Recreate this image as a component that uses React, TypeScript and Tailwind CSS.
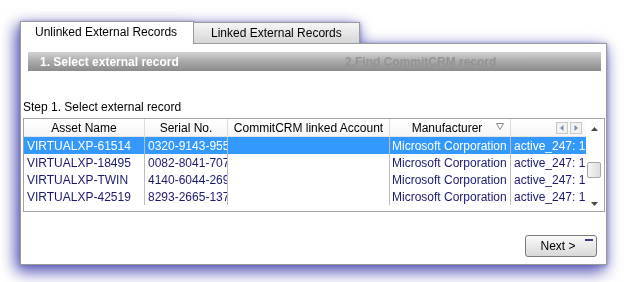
import React from "react";

const rows = [
  { name: "VIRTUALXP-61514", serial: "0320-9143-955", sel: true },
  { name: "VIRTUALXP-18495", serial: "0082-8041-707", sel: false },
  { name: "VIRTUALXP-TWIN", serial: "4140-6044-269", sel: false },
  { name: "VIRTUALXP-42519", serial: "8293-2665-137", sel: false },
];

export default function App() {
  return (
    <div
      className="w-[625px] h-[282px] bg-white overflow-hidden pl-[20px] pt-[20px]"
      style={{ fontFamily: '"Liberation Sans", Arial, sans-serif' }}
    >
      <div className="w-[587px] [filter:drop-shadow(-3px_5px_8px_rgba(70,70,175,0.8))_drop-shadow(0_1px_2px_rgba(70,70,175,0.6))]">
        {/* tabs */}
        <div className="flex items-end h-[23px]">
          <div className="w-[174px] h-[23px] bg-white border border-b-0 border-[#9a9a9a] text-[12px] text-black pl-[14px] pt-[3px] leading-[15px] relative z-10 -mb-px">
            Unlinked External Records
          </div>
          <div className="w-[166px] h-[21px] bg-gradient-to-b from-[#f6f6f6] to-[#d6d6d6] border border-l-0 border-b-0 border-[#9a9a9a] text-[12px] text-black pl-[17px] pt-[3px] leading-[15px]">
            Linked External Records
          </div>
        </div>
        {/* panel */}
        <div className="h-[222px] bg-white border border-[#9a9a9a] flex flex-col">
          <div className="mt-[8px] ml-[7px] mr-[5px] h-[19px] bg-gradient-to-b from-[#d4d4d4] via-[#a9a9a9] to-[#8c8c8c] flex items-center text-[12px] font-bold leading-[14px]">
            <span className="ml-[12px] text-white w-[305px]">1. Select external record</span>
            <span className="text-[#939393]">2.Find CommitCRM record</span>
          </div>
          <div className="mt-[29px] ml-[2px] text-[12px] leading-[14px] text-black">
            Step 1. Select external record
          </div>
          {/* table */}
          <div className="mt-[4px] ml-[2px] mr-[1px] h-[94px] border border-[#a5a5a5] flex text-[12px] leading-[14px]">
            <div className="w-[562px] flex flex-col">
              <div className="h-[18px] flex items-center border-b border-[#e4e4e4] bg-gradient-to-b from-white to-[#f6f6f6] text-black">
                <div className="w-[121px] h-full flex items-center justify-center border-r border-[#dcdcdc]">Asset Name</div>
                <div className="w-[83px] h-full flex items-center justify-center border-r border-[#dcdcdc]">Serial No.</div>
                <div className="w-[162px] h-full flex items-center justify-center border-r border-[#dcdcdc]">CommitCRM linked Account</div>
                <div className="w-[121px] h-full flex items-center justify-center border-r border-[#dcdcdc] relative">
                  <span className="ml-[-6px]">Manufacturer</span>
                  <svg className="absolute right-[6px] top-[4px]" width="8" height="7" viewBox="0 0 8 7">
                    <path d="M0.5 0.5 H7.5 L4 6.5 Z" fill="none" stroke="#8a8a8a" strokeWidth="1" />
                  </svg>
                </div>
                <div className="w-[75px] h-full flex items-center justify-end pr-[4px] gap-[2px]">
                  <div className="w-[12px] h-[12px] border border-[#c8c8c8] bg-[#f2f2f2] flex items-center justify-center">
                    <svg width="4" height="6" viewBox="0 0 4 6"><path d="M3.5 0 V6 L0 3 Z" fill="#7b8db8" /></svg>
                  </div>
                  <div className="w-[12px] h-[12px] border border-[#c8c8c8] bg-[#f2f2f2] flex items-center justify-center">
                    <svg width="4" height="6" viewBox="0 0 4 6"><path d="M0.5 0 V6 L4 3 Z" fill="#7b8db8" /></svg>
                  </div>
                </div>
              </div>
              {rows.map((r) => (
                <div
                  key={r.name}
                  className={
                    "h-[17px] flex " +
                    (r.sel ? "bg-[#3399ff] text-white" : "bg-white text-[#1a1a70]")
                  }
                >
                  <div className="w-[121px] pl-[3px] flex items-center border-r border-[#bdbdbd] overflow-hidden whitespace-nowrap">{r.name}</div>
                  <div className="w-[83px] pl-[3px] flex items-center border-r border-[#bdbdbd] overflow-hidden whitespace-nowrap">{r.serial}</div>
                  <div className="w-[162px] border-r border-[#bdbdbd]"></div>
                  <div className="w-[121px] pl-[2px] flex items-center border-r border-[#bdbdbd] overflow-hidden whitespace-nowrap">Microsoft Corporation</div>
                  <div className="w-[75px] pl-[3px] flex items-center overflow-hidden whitespace-nowrap">active_247: 1</div>
                </div>
              ))}
            </div>
            {/* vertical scrollbar */}
            <div className="w-[16px] h-full bg-white flex flex-col items-center">
              <div className="h-[18px] flex items-center justify-center mt-[1px]">
                <svg width="7" height="4" viewBox="0 0 7 4"><path d="M0 4 H7 L3.5 0 Z" fill="#4a4a4a" /></svg>
              </div>
              <div className="mt-[24px] w-[14px] h-[16px] rounded-[2px] border border-[#a8a8a8] bg-gradient-to-r from-[#f4f4f4] to-[#dedede]"></div>
              <div className="flex-1"></div>
              <div className="h-[14px] flex items-center justify-center">
                <svg width="7" height="4" viewBox="0 0 7 4"><path d="M0 0 H7 L3.5 4 Z" fill="#4a4a4a" /></svg>
              </div>
            </div>
          </div>
          {/* button */}
          <div className="flex justify-end mr-[9px] mt-[23px]">
            <div className="relative w-[72px] h-[22px] rounded-[3px] border border-[#7a7a7a] bg-gradient-to-b from-[#fbfbfb] to-[#d8d8d8] flex items-center justify-center text-[12px] text-black">
              <span className="ml-[-6px]">Next &gt;</span>
              <div className="absolute right-[3px] top-[3px] w-[8px] h-[2px] bg-[#3a3a80]"></div>
            </div>
          </div>
        </div>
      </div>
    </div>
  );
}
